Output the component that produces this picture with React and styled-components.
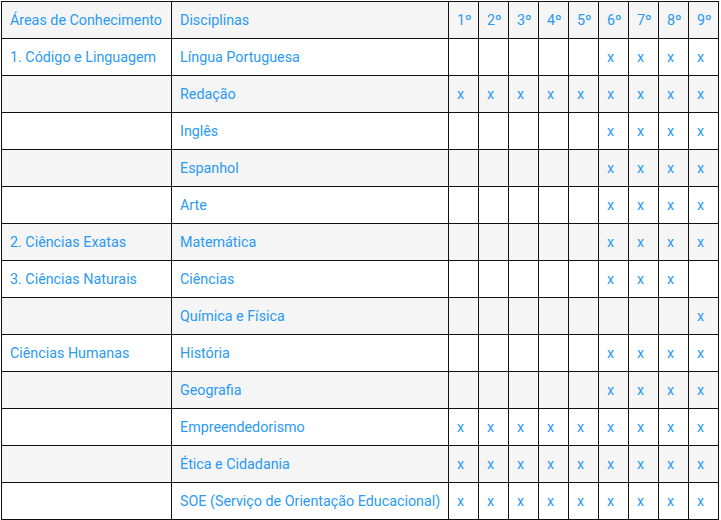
import React from "react";
import styled, { createGlobalStyle } from "styled-components";

const GlobalStyle = createGlobalStyle`
  body {
    margin: 0;
    padding: 1px 0 0 1px;
    background: #ffffff;
    font-family: Roboto, "Noto Sans", sans-serif;
  }
`;

const grades = ["1º", "2º", "3º", "4º", "5º", "6º", "7º", "8º", "9º"];

// marks: which grades (1..9) have an "x"
const rows = [
  { area: "1. Código e Linguagem", subject: "Língua Portuguesa", from: 6, to: 9 },
  { area: "", subject: "Redação", from: 1, to: 9 },
  { area: "", subject: "Inglês", from: 6, to: 9 },
  { area: "", subject: "Espanhol", from: 6, to: 9 },
  { area: "", subject: "Arte", from: 6, to: 9 },
  { area: "2. Ciências Exatas", subject: "Matemática", from: 6, to: 9 },
  { area: "3. Ciências Naturais", subject: "Ciências", from: 6, to: 8 },
  { area: "", subject: "Química e Física", from: 9, to: 9 },
  { area: "Ciências Humanas", subject: "História", from: 6, to: 9 },
  { area: "", subject: "Geografia", from: 6, to: 9 },
  { area: "", subject: "Empreendedorismo", from: 1, to: 9 },
  { area: "", subject: "Ética e Cidadania", from: 1, to: 9 },
  { area: "", subject: "SOE (Serviço de Orientação Educacional)", from: 1, to: 9 },
];

export default function App() {
  return (
    <>
      <GlobalStyle />
      <Table>
        <colgroup>
          <col style={{ width: 170 }} />
          <col style={{ width: 277 }} />
          {grades.map((g) => (
            <col key={g} style={{ width: 30 }} />
          ))}
        </colgroup>
        <thead>
          <Row $shaded>
            <Cell>Áreas de Conhecimento</Cell>
            <Cell>Disciplinas</Cell>
            {grades.map((g) => (
              <Cell key={g}>{g}</Cell>
            ))}
          </Row>
        </thead>
        <tbody>
          {rows.map((r, i) => (
            <Row key={r.subject} $shaded={i % 2 === 1}>
              <Cell>{r.area}</Cell>
              <Cell>{r.subject}</Cell>
              {grades.map((g, k) => (
                <Cell key={g}>{k + 1 >= r.from && k + 1 <= r.to ? "x" : ""}</Cell>
              ))}
            </Row>
          ))}
        </tbody>
      </Table>
    </>
  );
}

const Table = styled.table`
  border-collapse: collapse;
  table-layout: fixed;
  width: 717px;
  color: #2b9af3;
  font-size: 14.3px;
`;

const Row = styled.tr`
  height: 37px;
  background: ${(p) => (p.$shaded ? "#f5f5f5" : "#ffffff")};
`;

const Cell = styled.td`
  border: 1px solid #111;
  padding: 0 0 1px 8px;
  white-space: nowrap;
  overflow: hidden;
  vertical-align: middle;
`;
